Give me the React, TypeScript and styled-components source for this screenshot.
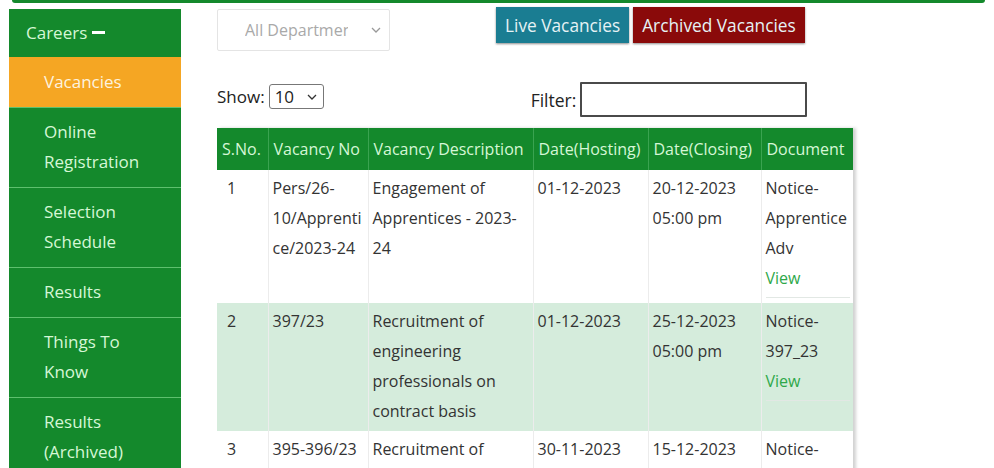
import styled, { createGlobalStyle } from "styled-components";

const GlobalStyle = createGlobalStyle`
  html, body {
    margin: 0;
    padding: 0;
    background: #ffffff;
    font-family: "Open Sans", "Noto Sans", sans-serif;
    overflow: hidden;
  }
`;

const green = "#14892c";

const TopBar = styled.div`
  height: 3px;
  margin: 0 9px 6px 12px;
  background: ${green};
  border-radius: 0 0 8px 8px;
`;

const Layout = styled.div`
  display: flex;
  align-items: flex-start;
  padding-left: 9px;
`;

const Sidebar = styled.nav`
  width: 172px;
  flex-shrink: 0;
  background: ${green};
`;

const SideHead = styled.div`
  display: flex;
  align-items: center;
  gap: 5px;
  height: 47px;
  padding: 0 0 1px 17px;
  font-size: 17px;
  color: #d6f7d6;
`;

const Dash = styled.span`
  display: inline-block;
  width: 13px;
  height: 3px;
  background: #ffffff;
`;

const SideItem = styled.div<{ $active?: boolean }>`
  padding: 9px 10px 10px 35px;
  font-size: 17px;
  line-height: 30px;
  color: ${(p) => (p.$active ? "#fdf3df" : "#d6f7d6")};
  background: ${(p) => (p.$active ? "#f5a623" : "transparent")};
  border-top: 1px solid ${(p) => (p.$active ? "#f5a623" : "#5ec06e")};
`;

const Content = styled.main`
  margin-left: 36px;
  width: 640px;
`;

const Toolbar = styled.div`
  display: flex;
  align-items: flex-start;
  margin-top: -1px;
`;

const DeptSelect = styled.div`
  box-sizing: border-box;
  width: 173px;
  height: 42px;
  margin-top: 1px;
  border: 1px solid #e4e4e4;
  border-radius: 2px;
  display: flex;
  align-items: center;
  justify-content: space-between;
  padding: 0 8px 0 27px;
  font-size: 16px;
  color: #a9a9a9;
  white-space: nowrap;
  overflow: hidden;
`;

const DeptText = styled.span`
  width: 103px;
  overflow: hidden;
`;

const Buttons = styled.div`
  display: flex;
  gap: 4px;
  margin-left: 106px;
  margin-top: -1px;
`;

const TabButton = styled.div<{ $bg: string }>`
  height: 36px;
  display: flex;
  align-items: center;
  padding: 0 9px;
  font-size: 17.3px;
  color: #e6f2f5;
  background: ${(p) => p.$bg};
  box-shadow: 0 1px 2px rgba(0, 0, 0, 0.45);
`;

const Controls = styled.div`
  display: flex;
  align-items: flex-start;
  margin-top: 31px;
`;

const ShowGroup = styled.div`
  display: flex;
  align-items: center;
  gap: 4px;
  margin-top: 2px;
  font-size: 17px;
  color: #222;
`;

const SmallSelect = styled.div`
  box-sizing: border-box;
  width: 55px;
  height: 25px;
  border: 1px solid #777;
  border-radius: 3px;
  display: flex;
  align-items: center;
  justify-content: space-between;
  padding: 0 6px 0 5px;
  font-size: 17px;
  color: #222;
`;

const FilterGroup = styled.div`
  display: flex;
  align-items: center;
  gap: 4px;
  margin-left: 207px;
  font-size: 17.5px;
  color: #222;
`;

const FilterInput = styled.div`
  box-sizing: border-box;
  width: 227px;
  height: 35px;
  border: 2px solid #4a4a4a;
  border-radius: 1px;
`;

const Table = styled.table`
  margin-top: 11px;
  width: 636px;
  border-collapse: collapse;
  table-layout: fixed;
  box-shadow: 3px 0 3px rgba(0, 0, 0, 0.18);
  font-size: 16px;
`;

const Th = styled.th`
  background: ${green};
  color: #d6f7d6;
  font-weight: 400;
  text-align: left;
  height: 42px;
  padding: 0 5px;
  white-space: nowrap;
  border-left: 1px solid #3aa350;
  &:first-child {
    border-left: none;
  }
`;

const Tr = styled.tr<{ $alt?: boolean }>`
  background: ${(p) => (p.$alt ? "#d5ecdc" : "#ffffff")};
`;

const Td = styled.td`
  vertical-align: top;
  padding: 3px 3px 5px 4px;
  line-height: 30px;
  color: #333;
  border-left: 1px solid #ececec;
  overflow-wrap: anywhere;
  &:first-child {
    border-left: none;
    padding-left: 10px;
  }
`;

const DocBlock = styled.div`
  padding-bottom: 4px;
  border-bottom: 1px solid #e2e8e4;
`;

const ViewLink = styled.span`
  display: block;
  color: #2ea84a;
`;

const Chevron = ({ color }: { color: string }) => (
  <svg width="10" height="6" viewBox="0 0 10 6" fill="none">
    <path d="M1 1l4 4 4-4" stroke={color} strokeWidth="1.3" />
  </svg>
);

const rows = [
  {
    no: "1",
    vac: "Pers/26-10/Apprentice/2023-24",
    desc: "Engagement of Apprentices - 2023-24",
    host: "01-12-2023",
    close: ["20-12-2023", "05:00 pm"],
    doc: ["Notice-", "Apprentice", "Adv"],
  },
  {
    no: "2",
    vac: "397/23",
    desc: "Recruitment of engineering professionals on contract basis",
    host: "01-12-2023",
    close: ["25-12-2023", "05:00 pm"],
    doc: ["Notice-", "397_23"],
  },
  {
    no: "3",
    vac: "395-396/23",
    desc: "Recruitment of engineering professionals",
    host: "30-11-2023",
    close: ["15-12-2023", "05:00 pm"],
    doc: ["Notice-", "395_23"],
  },
];

const widths = [51, 100, 165, 115, 113, 92];
const headers = [
  "S.No.",
  "Vacancy No",
  "Vacancy Description",
  "Date(Hosting)",
  "Date(Closing)",
  "Document",
];
const menu: string[][] = [
  ["Vacancies"],
  ["Online", "Registration"],
  ["Selection", "Schedule"],
  ["Results"],
  ["Things To", "Know"],
  ["Results", "(Archived)"],
];

export default function App() {
  return (
    <>
      <GlobalStyle />
      <TopBar />
      <Layout>
        <Sidebar>
          <SideHead>
            Careers <Dash />
          </SideHead>
          {menu.map((lines, i) => (
            <SideItem key={lines.join(" ")} $active={i === 0}>
              {lines.map((l) => (
                <div key={l}>{l}</div>
              ))}
            </SideItem>
          ))}
        </Sidebar>
        <Content>
          <Toolbar>
            <DeptSelect>
              <DeptText>All Departments</DeptText>
              <Chevron color="#999" />
            </DeptSelect>
            <Buttons>
              <TabButton $bg="#1a7d92">Live Vacancies</TabButton>
              <TabButton $bg="#8a0a0a">Archived Vacancies</TabButton>
            </Buttons>
          </Toolbar>
          <Controls>
            <ShowGroup>
              Show:
              <SmallSelect>
                10
                <Chevron color="#333" />
              </SmallSelect>
            </ShowGroup>
            <FilterGroup>
              Filter:
              <FilterInput />
            </FilterGroup>
          </Controls>
          <Table>
            <colgroup>
              {widths.map((w, i) => (
                <col key={i} style={{ width: w }} />
              ))}
            </colgroup>
            <thead>
              <tr>
                {headers.map((h) => (
                  <Th key={h}>{h}</Th>
                ))}
              </tr>
            </thead>
            <tbody>
              {rows.map((r, i) => (
                <Tr key={r.no} $alt={i === 1}>
                  <Td>{r.no}</Td>
                  <Td>{r.vac}</Td>
                  <Td>{r.desc}</Td>
                  <Td>{r.host}</Td>
                  <Td>
                    {r.close.map((c) => (
                      <div key={c}>{c}</div>
                    ))}
                  </Td>
                  <Td>
                    <DocBlock>
                      {r.doc.map((d) => (
                        <div key={d}>{d}</div>
                      ))}
                      <ViewLink>View</ViewLink>
                    </DocBlock>
                  </Td>
                </Tr>
              ))}
            </tbody>
          </Table>
        </Content>
      </Layout>
    </>
  );
}
